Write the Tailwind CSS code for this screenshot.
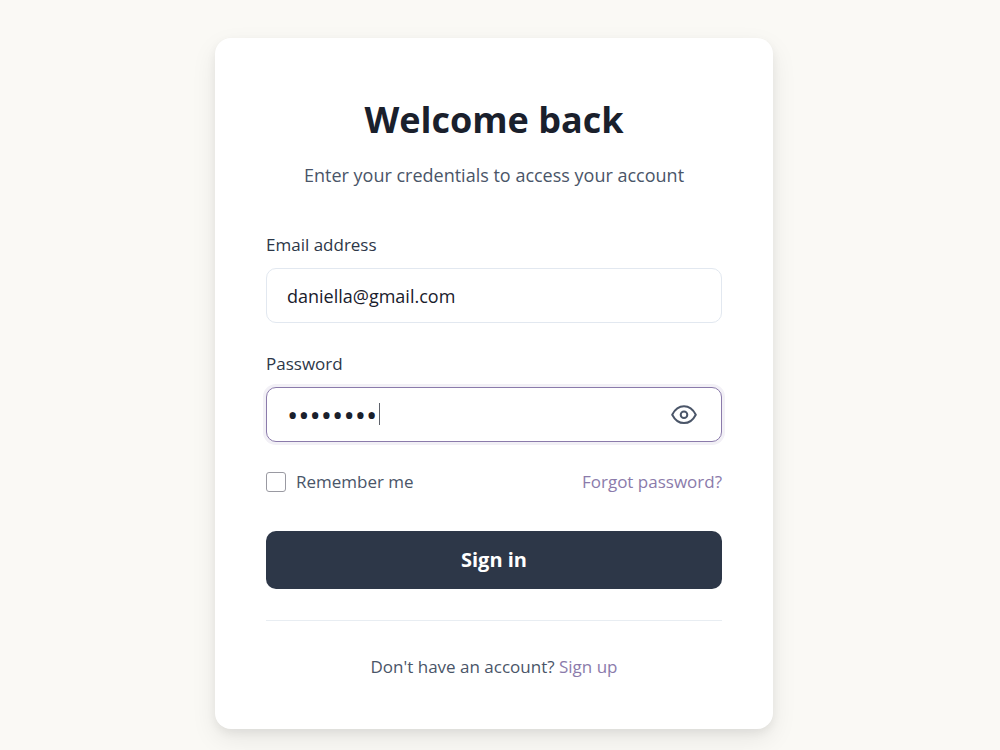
<!DOCTYPE html>
<html lang="en">
<head>
    <meta charset="UTF-8">
    <meta name="viewport" content="width=device-width, initial-scale=1.0">
    <title>Sign in</title>
    <script src="https://cdn.jsdelivr.net/npm/@tailwindcss/browser@4"></script>
</head>
<body class="min-h-screen bg-[#faf9f5] pt-[38px] pr-3 font-['Segoe_UI','Open_Sans',sans-serif] text-[17px] leading-6 text-[#4a5568]">

<main class="mx-auto w-full max-w-[558px] rounded-2xl bg-white px-[51px] pt-14 pb-[50px] shadow-[0_10px_26px_rgba(0,0,0,0.08),0_4px_10px_rgba(0,0,0,0.06)]">

    <!-- Heading -->
    <div class="text-center">
        <h1 class="text-4xl leading-[52px] font-bold text-[#1a202c]">Welcome back</h1>
        <p class="mt-[15px] text-lg leading-7">Enter your credentials to access your account</p>
    </div>

    <form class="mt-11" onsubmit="return false">
        <!-- Email -->
        <label for="email" class="block text-[#2d3748]">Email address</label>
        <input id="email" type="email" value="daniella@gmail.com"
               class="mt-[11px] block h-[55px] w-full rounded-[10px] border border-[#e2e8f0] bg-white px-5 text-lg text-[#1a202c] outline-none">

        <!-- Password -->
        <label for="password" class="mt-[29px] block text-[#2d3748]">Password</label>
        <div class="relative mt-[11px]">
            <input id="password" type="password" value="password"
                   class="block h-[55px] w-full rounded-[10px] border border-[#8b7bab] bg-white pr-16 pl-5 text-[30px] text-[#1a202c] caret-transparent ring-3 ring-[#f2f0f6] outline-none">
            <span class="absolute top-4 left-[113px] h-[22px] w-px bg-[#1a202c]/70"></span>
            <button type="button" id="togglePassword" aria-label="Show password" class="absolute top-[14px] right-6" onclick="togglePassword()">
                <svg class="size-7" viewBox="0 0 28 28" fill="none" stroke="#4a5568" stroke-width="2" stroke-linejoin="round">
                    <path d="M2.2 13.700C5 8.300 9.300 5.300 14 5.300S23 8.300 25.800 13.700C23 19.100 18.700 22.100 14 22.100S5 19.100 2.200 13.700Z"/>
                    <circle cx="14" cy="13.700" r="3.3"/>
                </svg>
            </button>
        </div>

        <!-- Options -->
        <div class="mt-7 flex items-center justify-between">
            <label for="remember" class="flex items-center gap-[10px]">
                <input id="remember" type="checkbox" class="size-5 appearance-none rounded-[3px] border border-[#9a9aa2] bg-white checked:bg-[#8b7bab]">
                Remember me
            </label>
            <a href="#" class="text-[#8b7bab]">Forgot password?</a>
        </div>

        <button type="submit" class="mt-[37px] h-[58px] w-full rounded-[10px] bg-[#2d3748] text-xl font-bold text-white">Sign in</button>
    </form>

    <p class="mt-[31px] border-t border-[#e8edf2] pt-[34px] text-center">
        Don't have an account? <a href="#" class="text-[#8b7bab]">Sign up</a>
    </p>
</main>

<script>
    function togglePassword() {
        const input = document.getElementById("password");
        input.type = input.type === 'password' ? 'text' : 'password';
    }
</script>
</body>
</html>
